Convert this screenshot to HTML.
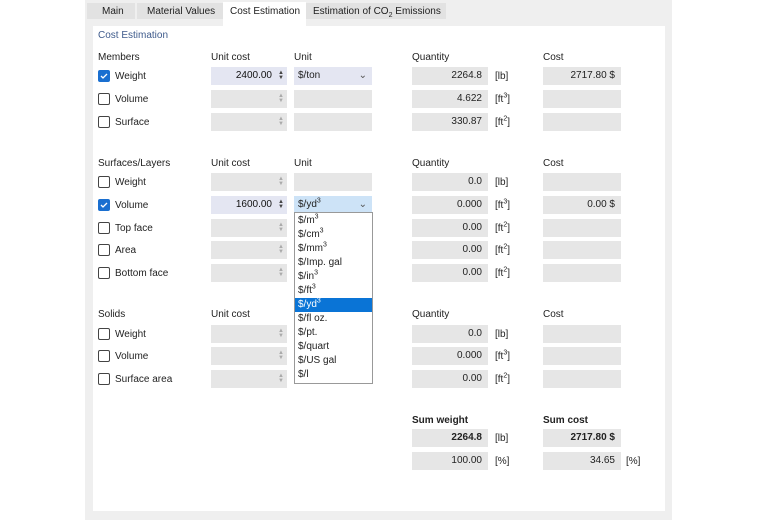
<!DOCTYPE html><html><head><style>
body{margin:0;width:760px;height:520px;background:#fff;font-family:"Liberation Sans",sans-serif;font-size:10px;color:#222;position:relative;overflow:hidden}
.a{position:absolute}
.f{position:absolute;height:18px;background:#e6e6e6;box-sizing:border-box;line-height:18px;text-align:right;padding-right:6px}
.cb{position:absolute;width:10px;height:10px;border:1px solid #444;border-radius:2px;background:#fff}
.cb.on{background:#1a6fd0;border-color:#1a6fd0}
.sp{position:absolute;font-size:6px;color:#aaa;line-height:5px;text-align:center;width:8px}
.h{position:absolute;font-size:10px}
.it{height:14px;line-height:14px;padding-left:3px}
sup{font-size:7px;line-height:0}
</style></head><body>
<div class="a" style="left:85px;top:0;width:587px;height:520px;background:#efefef"></div>
<div class="a" style="left:93px;top:26px;width:572px;height:485px;background:#fff"></div>
<div class="a" style="left:87px;top:3px;width:48px;height:16px;background:#e2e2e2"></div>
<div class="a" style="left:137px;top:3px;width:86px;height:16px;background:#e2e2e2"></div>
<div class="a" style="left:223px;top:2px;width:83px;height:24px;background:#fff"></div>
<div class="a" style="left:306px;top:3px;width:140px;height:16px;background:#e2e2e2"></div>
<div class="h" style="left:102px;top:6px">Main</div>
<div class="h" style="left:147px;top:6px">Material Values</div>
<div class="h" style="left:230px;top:6px">Cost Estimation</div>
<div class="h" style="left:313px;top:6px">Estimation of CO<sub style="font-size:7px">2</sub> Emissions</div>
<div class="h" style="left:98px;top:30px;color:#3f5b8c">Cost Estimation</div>

<div class="h" style="left:98px;top:52px">Members</div><div class="h" style="left:211px;top:52px">Unit cost</div><div class="h" style="left:294px;top:52px">Unit</div><div class="h" style="left:412px;top:52px">Quantity</div><div class="h" style="left:543px;top:52px">Cost</div>
<div class="h" style="left:98px;top:158px">Surfaces/Layers</div><div class="h" style="left:211px;top:158px">Unit cost</div><div class="h" style="left:294px;top:158px">Unit</div><div class="h" style="left:412px;top:158px">Quantity</div><div class="h" style="left:543px;top:158px">Cost</div>
<div class="h" style="left:98px;top:309px">Solids</div><div class="h" style="left:211px;top:309px">Unit cost</div><div class="h" style="left:412px;top:309px">Quantity</div><div class="h" style="left:543px;top:309px">Cost</div>
<div class="h" style="left:412px;top:415px;font-weight:bold">Sum weight</div><div class="h" style="left:543px;top:415px;font-weight:bold">Sum cost</div>

<script>
const rows=[
[76,'Weight',1,'2400.00','$/ton','2264.8','[lb]','2717.80 $',1],
[99,'Volume',0,'','','4.622','[ft<sup>3</sup>]','',0],
[122,'Surface',0,'','','330.87','[ft<sup>2</sup>]','',0],
[182,'Weight',0,'','','0.0','[lb]','',0],
[205,'Volume',1,'1600.00','$/yd<sup>3</sup>','0.000','[ft<sup>3</sup>]','0.00 $',2],
[228,'Top face',0,'','','0.00','[ft<sup>2</sup>]','',0],
[250,'Area',0,'','','0.00','[ft<sup>2</sup>]','',0],
[273,'Bottom face',0,'','','0.00','[ft<sup>2</sup>]','',0],
[334,'Weight',0,'','','0.0','[lb]','',0],
[356,'Volume',0,'','','0.000','[ft<sup>3</sup>]','',0],
[379,'Surface area',0,'','','0.00','[ft<sup>2</sup>]','',0]];
let h='';
for(const r of rows){const y=r[0]-9;
h+=`<div class="cb ${r[2]?'on':''}" style="left:98px;top:${y+3}px">${r[2]?'<svg width="10" height="10" style="position:absolute;left:0;top:0"><path d="M2 5l2 2 4-4" stroke="#fff" stroke-width="1.3" fill="none"/></svg>':''}</div>`;
h+=`<div class="h" style="left:115px;top:${y+4}px">${r[1]}</div>`;
h+=`<div class="f" style="left:211px;top:${y}px;width:76px;padding-right:15px;${r[2]?'background:#e4e6f2;color:#111':''}">${r[3]}</div>`;
h+=`<div class="sp" style="left:277px;top:${y+4}px;${r[2]?'color:#444':''}">▲<br>▼</div>`;
if(!(y>=300&&y<=380))h+=`<div class="f" style="left:294px;top:${y}px;width:78px;text-align:left;padding-left:4px;${r[8]==1?'background:#e4e6f2':''}${r[8]==2?'background:#cde3f7':''}">${r[4]}${r[8]?'<span style="position:absolute;right:5px;color:#555">&#8964;</span>':''}</div>`;
h+=`<div class="f" style="left:412px;top:${y}px;width:76px">${r[5]}</div>`;
h+=`<div class="h" style="left:495px;top:${y+4}px">${r[6]}</div>`;
h+=`<div class="f" style="left:543px;top:${y}px;width:78px">${r[7]}</div>`;}
document.write(h);
</script>
<div class="f" style="left:412px;top:429px;width:76px;font-weight:bold">2264.8</div><div class="h" style="left:495px;top:433px">[lb]</div>
<div class="f" style="left:543px;top:429px;width:78px;font-weight:bold">2717.80 $</div>
<div class="f" style="left:412px;top:452px;width:76px">100.00</div><div class="h" style="left:495px;top:456px">[%]</div>
<div class="f" style="left:543px;top:452px;width:78px">34.65</div><div class="h" style="left:626px;top:456px">[%]</div>

<div class="a" style="left:294px;top:212px;width:77px;height:169px;background:#fff;border:1px solid #999;padding-top:1px">
<div class="it">$/m<sup>3</sup></div><div class="it">$/cm<sup>3</sup></div><div class="it">$/mm<sup>3</sup></div><div class="it">$/Imp. gal</div><div class="it">$/in<sup>3</sup></div><div class="it">$/ft<sup>3</sup></div><div class="it" style="background:#0a74d6;color:#fff">$/yd<sup>3</sup></div><div class="it">$/fl oz.</div><div class="it">$/pt.</div><div class="it">$/quart</div><div class="it">$/US gal</div><div class="it">$/l</div>
</div>
</body></html>
